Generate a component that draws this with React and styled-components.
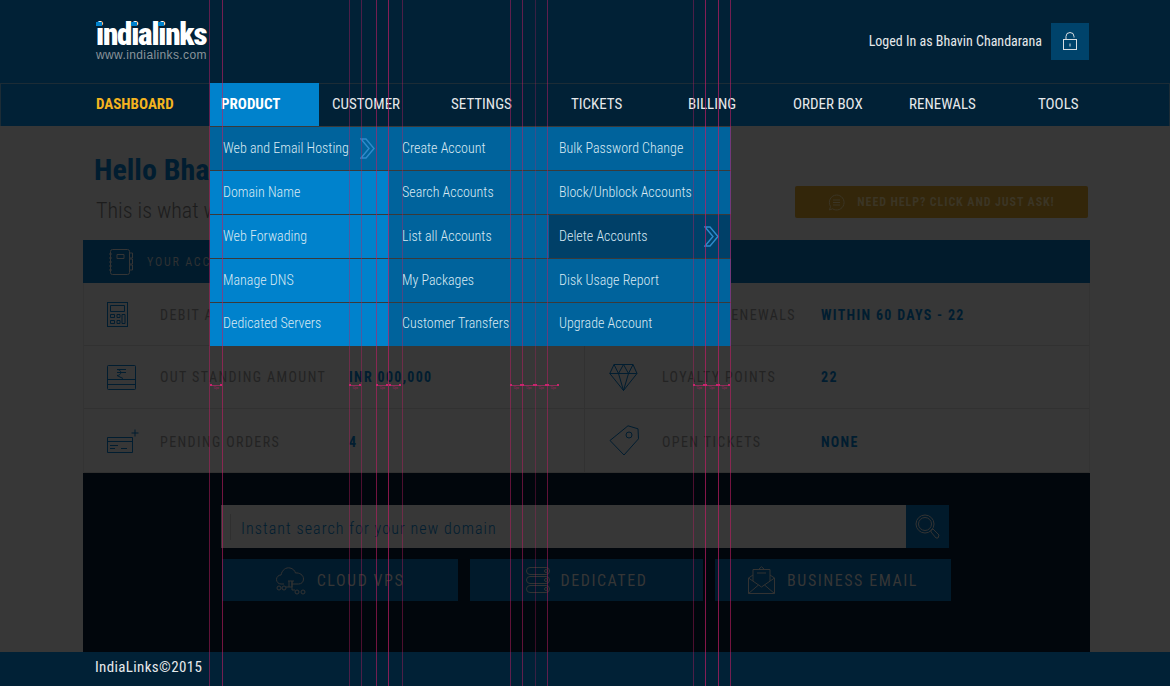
import React from 'react';
import styled, {createGlobalStyle} from 'styled-components';

const Global = createGlobalStyle`
    html, body { margin: 0; padding: 0; background: #373737; }
    * { box-sizing: border-box; }
`;

const FONT = `"Roboto Condensed", Roboto, "Liberation Sans", sans-serif`;

const Page = styled.div`
    position: relative;
    width: 1170px;
    height: 686px;
    overflow: hidden;
    display: flex;
    flex-direction: column;
    background: #373737;
    font-family: ${FONT};
    font-stretch: 75%;
`;

const Header = styled.header`
    height: 83px;
    background: #012136;
    display: flex;
    align-items: center;
    justify-content: space-between;
    padding: 0 81px 0 96px;
`;

const Logo = styled.div`
    position: relative;
    width: 112px;
    height: 42px;
    margin-top: -1px;
`;

const LogoName = styled.div`
    font-family: Roboto, sans-serif;
    font-stretch: 75%;
    font-weight: 900;
    font-size: 31px;
    line-height: 29px;
    letter-spacing: -1.2px;
    color: #fff;
`;

const LogoDot = styled.span`
    position: absolute;
    top: 2px;
    left: ${p => p.$left}px;
    width: 6px;
    height: 4px;
    background: #0082cc;
`;

const LogoUrl = styled.div`
    font-family: "Liberation Sans", sans-serif;
    font-size: 12px;
    line-height: 13px;
    letter-spacing: 0.38px;
    color: #8a949b;
`;

const User = styled.div`
    display: flex;
    align-items: center;
    gap: 9px;
    color: #e6e9eb;
    font-size: 14px;
    margin-top: -1px;
`;

const LockButton = styled.div`
    width: 38px;
    height: 37px;
    background: #00436b;
    display: flex;
    align-items: center;
    justify-content: center;
`;

const Nav = styled.nav`
    height: 43px;
    background: #012136;
    border: 1px solid #1c2c36;
    border-width: 1px 1px 0 1px;
    display: grid;
    grid-template-columns: 127px 109px 119px 120px 117px 105px 116px 129px 1fr;
    padding-left: 82px;
`;

const NavItem = styled.div`
    display: flex;
    align-items: center;
    margin-top: ${p => (p.$open ? -1 : 0)}px;
    padding: 0 0 ${p => (p.$open ? 1 : 3)}px ${p => (p.$open ? 11 : 13)}px;
    font-size: 15px;
    font-weight: ${p => (p.$open || p.$home ? 700 : 400)};
    color: ${p => (p.$home ? '#f4b41f' : p.$open ? '#fff' : '#e6e9eb')};
    background: ${p => (p.$open ? '#0082cc' : 'transparent')};
`;

const Main = styled.main`
    flex: 1;
    padding: 0 80px 0 83px;
    display: flex;
    flex-direction: column;
`;

const Hero = styled.section`
    height: 114px;
    padding: 26px 2px 0 11px;
    display: flex;
    justify-content: space-between;
    align-items: flex-start;
`;

const Title = styled.h1`
    margin: 0;
    font-size: 30px;
    line-height: 36px;
    font-weight: 700;
    color: #011d30;
`;

const Sub = styled.p`
    margin: 9px 0 0 2px;
    font-size: 22px;
    line-height: 28px;
    font-weight: 300;
    color: #1c1c1c;
`;

const HelpButton = styled.div`
    margin-top: 34px;
    width: 293px;
    height: 32px;
    border-radius: 2px;
    background: #33260a;
    display: flex;
    align-items: center;
    justify-content: center;
    gap: 12px;
    font-size: 12px;
    font-weight: 700;
    letter-spacing: 0.9px;
    color: #3b3525;
`;

const Card = styled.section`
    height: 233px;
    border: 1px solid #333;
    border-width: 0 1px;
    display: flex;
    flex-direction: column;
`;

const CardHead = styled.div`
    height: 43px;
    margin: 0 -1px;
    background: #011b2c;
    display: flex;
    align-items: center;
    gap: 14px;
    padding-left: 26px;
    font-size: 12px;
    letter-spacing: 1.8px;
    color: #2e3133;
`;

const Grid = styled.div`
    flex: 1;
    display: grid;
    grid-template-columns: 501px 1fr;
    grid-template-rows: 63px 63px 1fr;
`;

const Cell = styled.div`
    display: flex;
    align-items: center;
    border-bottom: 1px solid #313131;
    border-right: ${p => (p.$left ? '1px solid #313131' : 'none')};
    padding-left: ${p => (p.$left ? 23 : 24)}px;
`;

const IconSlot = styled.div`
    width: 53px;
    display: flex;
    align-items: center;
`;

const Label = styled.div`
    width: ${p => p.$w}px;
    padding-top: ${p => p.$nudge}px;
    font-size: 14px;
    letter-spacing: 1.4px;
    color: #232323;
`;

const Value = styled.div`
    padding-top: ${p => p.$nudge}px;
    font-size: 14px;
    font-weight: 700;
    letter-spacing: 1.3px;
    color: #011d30;
`;

const SearchArea = styled.section`
    flex: 1;
    background: #01060c;
    padding: 32px 0 0 138px;
`;

const SearchRow = styled.div`
    width: 728px;
    height: 43px;
    display: flex;
`;

const SearchBox = styled.div`
    flex: 1;
    background: #373737;
    display: flex;
    align-items: center;
    padding: 3px 0 0 9px;
    font-size: 16px;
    font-weight: 300;
    letter-spacing: 1.07px;
    color: #011d30;
`;

const Caret = styled.span`
    width: 1px;
    height: 26px;
    margin: -3px 10px 0 0;
    background: #2f2f2f;
`;

const SearchButton = styled.div`
    width: 43px;
    background: #011a2b;
    display: flex;
    align-items: center;
    justify-content: center;
`;

const Services = styled.div`
    margin: 11px 0 0 1px;
    display: grid;
    grid-template-columns: 236px 233px 236px;
    column-gap: 12px;
    width: 729px;
`;

const Service = styled.div`
    height: 42px;
    background: #011a2b;
    display: flex;
    align-items: center;
    justify-content: center;
    gap: 11px;
    font-size: 16px;
    letter-spacing: 1.55px;
    color: #363636;
`;

const Footer = styled.footer`
    height: 34px;
    background: #012136;
    display: flex;
    align-items: center;
    padding: 0 0 4px 95px;
    font-size: 15px;
    letter-spacing: 0.35px;
    color: #e6e9eb;
`;

/* dropdown sits over the page */
const Menu = styled.div`
    position: absolute;
    left: 210px;
    top: 126px;
    display: grid;
    grid-template-columns: 179px 160px 182px;
    background: #3a3a3a;
    padding-top: 1px;
`;

const MenuCol = styled.div`
    display: flex;
    flex-direction: column;
    gap: 1px;
`;

const MenuRow = styled.div`
    height: 43px;
    display: flex;
    align-items: center;
    justify-content: space-between;
    padding: 0 ${p => p.$arrow || 0}px 1px ${p => p.$pad}px;
    font-size: 14px;
    font-weight: 300;
    color: #d8e9f3;
    background: ${p => p.$bg};

    &:last-child {
        padding-bottom: 3px;
    }
`;

const GuideLine = styled.span`
    position: absolute;
    top: 0;
    bottom: 0;
    left: ${p => p.$x}px;
    width: 1px;
    background: rgba(190, 30, 100, ${p => p.$a});
    pointer-events: none;
`;

const Tick = styled.span`
    position: absolute;
    top: 384px;
    left: ${p => p.$x}px;
    width: ${p => p.$w}px;
    height: 2px;
    border: solid #c8246e;
    border-width: 0 2px;
    background: linear-gradient(transparent 50%, rgba(200, 40, 110, 0.6) 50%);
    font-size: 3px;
    line-height: 9px;
    text-align: center;
    color: #a81f62;
`;

const Line = ({size, w, h, color, children}) => (
    <svg width={w} height={h} viewBox={`0 0 ${w} ${h}`} fill="none" stroke={color} strokeWidth={size || 1}>
        {children}
    </svg>
);

const Chevron = () => (
    <Line w={15} h={21} color="#2f8bcb" size={1.4}>
        <path d="M1 1h5l8 9.5-8 9.5H1l8-9.5z"/>
    </Line>
);

const ICON = '#011d30';

const Calculator = () => (
    <Line w={21} h={25} color={ICON}>
        <rect x=".5" y=".5" width="20" height="24"/>
        <path d="M3.5 3.5h14v6h-14zM3.5 12.5h4v3h-4zM3.5 18.5h4v3h-4zM10 12.5h3v3h-3zM10 18.5h3v3h-3zM15 12.5h3v9h-3z"/>
    </Line>
);

const RupeeCard = () => (
    <Line w={29} h={25} color={ICON}>
        <rect x=".5" y=".5" width="28" height="24" rx="1"/>
        <path d="M.5 14.5h28M.5 19.5h28M10 4.5h9M10 7.5h9M10 4.5c5 0 5 6 0 6l6 3"/>
    </Line>
);

const CardPlus = () => (
    <Line w={32} h={24} color={ICON}>
        <path d="M25 8.5H.5v15h25v-15zM.5 12.5h25M3 16.5h8M3 19.500h5M14 19.500h6M28 .5v7M24.500 4h7"/>
    </Line>
);

const Diamond = () => (
    <Line w={29} h={27} color={ICON}>
        <path d="M5 .5h19l4 9-13.500 17L.8 9.500zM.8 9.500h27M5 .5l4.500 9 5-9 5 9 4.500-9M9.500 9.500l5 17 5-17"/>
    </Line>
);

const Tag = () => (
    <Line w={30} h={31} color={ICON}>
        <path d="M19 .8l10 3 .5 10L15 30 1 15.500z"/>
        <circle cx="20" cy="10" r="3"/>
    </Line>
);

const Notebook = () => (
    <Line w={24} h={26} color="#353535">
        <rect x="1.500" y=".5" width="19" height="25" rx="2"/>
        <path d="M0 5h3M0 9h3M0 13h3M0 17h3M0 21h3M8 5.500h7v4H8zM20.500 4h3v5h-3M20.500 10h3v5h-3M20.500 16h3v5h-3"/>
    </Line>
);

const Lock = () => (
    <Line w={16} h={19} color="#d8dde1">
        <rect x="1.500" y="7.500" width="13" height="10"/>
        <path d="M4 7.500V4.500a4 4 0 0 1 8 0v1M8 11.500v3" />
    </Line>
);

const Chat = () => (
    <Line w={17} h={17} color="#3b3525">
        <path d="M8.500 1a7.500 7.500 0 1 1-4 13.800L1.500 16l1-3.500A7.500 7.500 0 0 1 8.500 1z"/>
        <path d="M5 6h7M5 8.500h7M5 11h7"/>
    </Line>
);

const Magnifier = () => (
    <Line w={25} h={25} color="#333">
        <circle cx="10" cy="10" r="9"/>
        <circle cx="10" cy="10" r="6.500"/>
        <path d="M16 16l2-1 6 6-1 3-2 0-5-6z"/>
    </Line>
);

const Cloud = () => (
    <Line w={30} h={29} color="#333">
        <path d="M8 18H5a4.500 4.500 0 0 1 0-9c1-5 5-8 9-7 3 .5 5 3 5.500 5 4-.5 8 2 8 6 0 3-2 5-5 5h-7M12 15h6M13 15v6h3v-6M16 15v9"/>
        <circle cx="3" cy="22" r="2"/><circle cx="8" cy="22" r="2"/>
        <path d="M10 21h3M16 24h3"/>
        <circle cx="21" cy="26" r="2"/><circle cx="27" cy="26" r="2"/>
    </Line>
);

const Servers = () => (
    <Line w={24} h={27} color="#333">
        <rect x=".5" y=".5" width="23" height="7" rx="3.500"/>
        <rect x=".5" y="9.500" width="23" height="7" rx="3.500"/>
        <rect x=".5" y="18.500" width="23" height="7" rx="3.500"/>
        <circle cx="20" cy="4" r="1.500"/><circle cx="20" cy="13" r="1.500"/><circle cx="20" cy="22" r="1.500"/>
    </Line>
);

const Envelope = () => (
    <Line w={28} h={28} color="#333">
        <path d="M.5 12v15.500h26V12L13.500 21zM.5 27.500l10-8.500M26.500 27.500l-10-8.500M5 15V3.500h17V15M.5 12L5 9M26.500 12L22 9M10.500 3.500L13.500 .8l3 2.700M9 7h9"/>
    </Line>
);

const rows = [
    [
        {icon: <Calculator/>, label: 'DEBIT AMOUNT', w: 189, value: 'INR 000,000'},
        {icon: <Calculator/>, label: 'DOMAIN RENEWALS', w: 159, value: 'WITHIN 60 DAYS - 22'},
    ],
    [
        {icon: <RupeeCard/>, label: 'OUT STANDING AMOUNT', w: 189, value: 'INR 000,000'},
        {icon: <Diamond/>, label: 'LOYALTY POINTS', w: 159, value: '22'},
    ],
    [
        {icon: <CardPlus/>, label: 'PENDING ORDERS', w: 189, value: '4'},
        {icon: <Tag/>, label: 'OPEN TICKETS', w: 159, value: 'NONE'},
    ],
];

const BLUE = '#0082cc';
const MID = '#00639c';
const DARK = '#004068';

const menu = [
    {pad: 13, items: [
        {t: 'Web and Email Hosting', bg: MID, arrow: 14},
        {t: 'Domain Name', bg: BLUE},
        {t: 'Web Forwading', bg: BLUE},
        {t: 'Manage DNS', bg: BLUE},
        {t: 'Dedicated Servers', bg: BLUE},
    ]},
    {pad: 13, items: [
        {t: 'Create Account', bg: MID},
        {t: 'Search Accounts', bg: MID},
        {t: 'List all Accounts', bg: MID},
        {t: 'My Packages', bg: MID},
        {t: 'Customer Transfers', bg: MID},
    ]},
    {pad: 10, items: [
        {t: 'Bulk Password Change', bg: MID},
        {t: 'Block/Unblock Accounts', bg: MID},
        {t: 'Delete Accounts', bg: DARK, arrow: 12},
        {t: 'Disk Usage Report', bg: MID},
        {t: 'Upgrade Account', bg: MID},
    ]},
];

const guides = [
    [209, .5], [222, .6], [349, .4], [361, .4], [376, .6], [388, .7], [402, .4], [510, .5],
    [522, .5], [535, .3], [547, .5], [693, .4], [705, .7], [718, .7], [730, .6],
];

const ticks = [
    [210, 12], [349, 12], [376, 12], [389, 12], [510, 12], [522, 13], [535, 12], [547, 12], [693, 12], [705, 13], [718, 12],
];

const App = () => {
    const navItems = ['CUSTOMER', 'SETTINGS', 'TICKETS', 'BILLING', 'ORDER BOX', 'RENEWALS', 'TOOLS'];
    return (
        <Page>
            <Global/>
            <Header>
                <Logo>
                    <LogoName>indialinks</LogoName>
                    <LogoDot $left={0}/>
                    <LogoDot $left={35}/>
                    <LogoDot $left={62}/>
                    <LogoUrl>www.indialinks.com</LogoUrl>
                </Logo>
                <User>
                    Loged In as Bhavin Chandarana
                    <LockButton><Lock/></LockButton>
                </User>
            </Header>
            <Nav>
                <NavItem $home>DASHBOARD</NavItem>
                <NavItem $open>PRODUCT</NavItem>
                {navItems.map(n => <NavItem key={n}>{n}</NavItem>)}
            </Nav>
            <Main>
                <Hero>
                    <div>
                        <Title>Hello Bhavin Chandarana</Title>
                        <Sub>This is what we have for your account</Sub>
                    </div>
                    <HelpButton><Chat/>NEED HELP? CLICK AND JUST ASK!</HelpButton>
                </Hero>
                <Card>
                    <CardHead><Notebook/>YOUR ACCOUNT SUMMARY</CardHead>
                    <Grid>
                        {rows.map((r, n) => r.map((c, i) => (
                            <Cell key={c.label} $left={i === 0}>
                                <IconSlot>{c.icon}</IconSlot>
                                <Label $w={c.w} $nudge={n === 1 ? 0 : 2}>{c.label}</Label>
                                <Value $nudge={n === 1 ? 0 : 2}>{c.value}</Value>
                            </Cell>
                        )))}
                    </Grid>
                </Card>
                <SearchArea>
                    <SearchRow>
                        <SearchBox><Caret/>Instant search for your new domain</SearchBox>
                        <SearchButton><Magnifier/></SearchButton>
                    </SearchRow>
                    <Services>
                        <Service><Cloud/>CLOUD VPS</Service>
                        <Service><Servers/>DEDICATED</Service>
                        <Service><Envelope/>BUSINESS EMAIL</Service>
                    </Services>
                </SearchArea>
            </Main>
            <Footer>IndiaLinks©2015</Footer>
            <Menu>
                {menu.map((col, i) => (
                    <MenuCol key={i}>
                        {col.items.map(it => (
                            <MenuRow key={it.t} $bg={it.bg} $pad={col.pad} $arrow={it.arrow}>
                                {it.t}
                                {it.arrow && <Chevron/>}
                            </MenuRow>
                        ))}
                    </MenuCol>
                ))}
            </Menu>
            {guides.map(([x, a]) => <GuideLine key={x} $x={x} $a={a}/>)}
            {ticks.map(([x, w]) => <Tick key={x} $x={x} $w={w}>12px</Tick>)}
        </Page>
    );
};

export default App;
